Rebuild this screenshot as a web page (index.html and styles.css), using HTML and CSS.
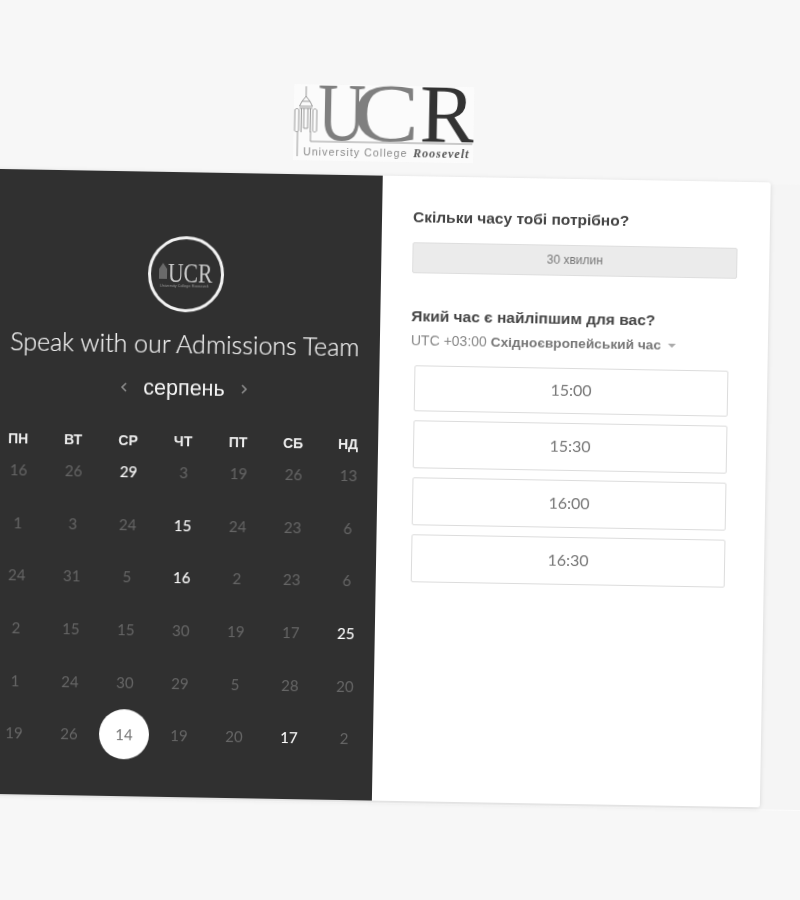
FILE: index.html
```html
<!DOCTYPE html>
<html lang="uk">
<head>
<meta charset="utf-8">
<title>Speak with our Admissions Team</title>
<link rel="stylesheet" href="styles.css">
</head>
<body>
<div class="stage">
  <header class="brand">
    <svg class="brand-logo" width="180" height="76" viewBox="0 0 180 76">
      <rect width="180" height="76" fill="#fbfbfb"/>
      <g fill="none" stroke="#999" stroke-width="1">
        <path d="M12 2V12M8 17L12 12L16 17M5.5 22L8 17H16L18.5 22Z"/>
        <path d="M5.5 24H18.5M7.5 24V48M10 24V44H14V24M16.5 24V48"/>
        <path d="M1 26C1 24 5 24 5 26V46C5 48 1 48 1 46ZM19 26C19 24 23 24 23 26V46C23 48 19 48 19 46Z"/>
        <path d="M4 47V72M17 47V57H179"/>
      </g>
      <g class="brand-letters">
        <text class="brand-gray" transform="translate(24 55) scale(.8 1)">U</text>
        <text class="brand-gray" transform="translate(59 55) scale(1.2 1)">C</text>
        <text class="brand-dark" transform="translate(126 55) scale(1 1)">R</text>
      </g>
      <text class="brand-tag" x="10" y="71">University College</text>
      <text class="brand-tag-name" x="120" y="71">Roosevelt</text>
    </svg>
  </header>
  <div class="band">
    <main class="card">
      <section class="panel-dark">
        <div class="avatar">
          <svg width="70" height="70" viewBox="0 0 70 70">
            <path d="M8 30V40H16V30L12 24Z" fill="#6a6a6a"/>
            <text class="avatar-letters" transform="translate(17 43) scale(.8 1)">UCR</text>
            <text class="avatar-tag" x="9" y="48">University College Roosevelt</text>
          </svg>
        </div>
        <h1 class="event-title">Speak with our Admissions Team</h1>
        <div class="month-nav">
          <svg width="8" height="12" viewBox="0 0 8 12"><path d="M6 2L2 6L6 10" fill="none" stroke="#8c8c8c" stroke-width="1.600"/></svg>
          <span class="month">серпень</span>
          <svg width="8" height="12" viewBox="0 0 8 12"><path d="M2 2L6 6L2 10" fill="none" stroke="#8c8c8c" stroke-width="1.600"/></svg>
        </div>
        <div class="weekdays">
          <span>ПН</span><span>ВТ</span><span>СР</span><span>ЧТ</span><span>ПТ</span><span>СБ</span><span>НД</span>
        </div>
        <div class="dates">
          <span>16</span><span>26</span><span class="on">29</span><span>3</span><span>19</span><span>26</span><span>13</span>
          <span>1</span><span>3</span><span>24</span><span class="on">15</span><span>24</span><span>23</span><span>6</span>
          <span>24</span><span>31</span><span>5</span><span class="on">16</span><span>2</span><span>23</span><span>6</span>
          <span>2</span><span>15</span><span>15</span><span>30</span><span>19</span><span>17</span><span class="on">25</span>
          <span>1</span><span>24</span><span>30</span><span>29</span><span>5</span><span>28</span><span>20</span>
          <span>19</span><span>26</span><span class="selected"><b>14</b></span><span>19</span><span>20</span><span class="on">17</span><span>2</span>
        </div>
      </section>
      <section class="panel-light">
        <h2 class="question">Скільки часу тобі потрібно?</h2>
        <div class="duration">30 хвилин</div>
        <h2 class="question question-time">Який час є найліпшим для вас?</h2>
        <div class="zone">UTC +03:00 <strong>Східноєвропейський час</strong><i class="caret"></i></div>
        <div class="slots">
          <button class="slot">15:00</button>
          <button class="slot">15:30</button>
          <button class="slot">16:00</button>
          <button class="slot">16:30</button>
        </div>
      </section>
    </main>
  </div>
</div>
</body>
</html>
```
FILE: styles.css
```css
html, body {
  margin: 0;
  height: 100%;
  overflow: hidden;
  background: #f7f7f7;
}

.stage {
  width: 800px;
  height: 900px;
  padding-top: 86px;
  box-sizing: border-box;
  transform: rotate(1deg);
  transform-origin: 400px 450px;
  filter: blur(0.35px);
  font-family: "Liberation Sans", Arial, sans-serif;
}

.brand {
  display: flex;
  justify-content: center;
  padding-right: 44px;
  height: 76px;
}

.brand-logo { display: block; }

.brand-letters text {
  font-family: "Liberation Serif", serif;
  font-size: 83px;
}
.brand-gray { fill: #7f7f7f; }
.brand-dark { fill: #333; }

.brand-tag {
  font-family: "Liberation Sans", sans-serif;
  font-size: 10.5px;
  letter-spacing: 1.1px;
  fill: #888;
}
.brand-tag-name {
  font-family: "Liberation Serif", serif;
  font-size: 12px;
  font-style: italic;
  font-weight: 700;
  letter-spacing: 1px;
  fill: #555;
}

.band {
  margin: 16px -100px 0;
  padding: 0 44px 2.4px 0;
  display: flex;
  justify-content: center;
  background: #f5f5f5;
  box-shadow: 0 1px 0 #fbfbfb;
}

.card {
  display: flex;
  width: 776px;
  height: 625px;
  flex: none;
  margin-top: -2px;
  border-radius: 3px;
  box-shadow: 0 1px 5px rgba(0, 0, 0, 0.13);
}

.panel-dark {
  width: 388px;
  box-sizing: border-box;
  padding: 64px 2px 0 0;
  background: #303030;
  color: #fff;
  display: flex;
  flex-direction: column;
  align-items: center;
}

.avatar {
  width: 70px;
  height: 70px;
  border: 3px solid #f2f2f2;
  border-radius: 50%;
}
.avatar svg { display: block; }
.avatar-letters {
  font-family: "Liberation Serif", serif;
  font-size: 27px;
  fill: #c8c8c8;
}
.avatar-tag {
  font-family: "Liberation Sans", sans-serif;
  font-size: 3.8px;
  fill: #999;
}

.event-title {
  margin: 15px 0 0;
  font-family: Lato, sans-serif;
  font-size: 25px;
  font-weight: 300;
  line-height: 32px;
  white-space: nowrap;
  color: #f5f5f5;
  -webkit-text-stroke: 0.15px #f5f5f5;
}

.month-nav {
  margin-top: 15px;
  height: 28px;
  display: flex;
  align-items: center;
  gap: 15px;
}
.month {
  font-size: 21.5px;
  line-height: 28px;
  color: #f5f5f5;
}

.weekdays, .dates {
  width: 385px;
  display: grid;
  grid-template-columns: repeat(7, 55px);
  text-align: center;
}

.weekdays {
  margin-top: 32px;
  font-size: 14px;
  font-weight: 700;
  line-height: 14px;
  color: #eee;
}

.dates {
  margin: 14px 0 0 2px;
  row-gap: 32.7px;
  font-family: Lato, sans-serif;
  font-size: 15px;
  line-height: 20px;
  color: #666;
}
.dates .on {
  color: #fff;
  -webkit-text-stroke: 0.1px #fff;
}
.selected {
  position: relative;
}
.selected::before {
  content: "";
  position: absolute;
  left: 50%;
  top: 50%;
  width: 50px;
  height: 50px;
  margin: -25px 0 0 -25px;
  border-radius: 50%;
  background: #fff;
}
.selected b {
  position: relative;
  font-weight: 400;
  color: #777;
}

.panel-light {
  width: 388px;
  box-sizing: border-box;
  padding: 31px 32px 0 31px;
  background: #fff;
  border-radius: 0 3px 3px 0;
}

.question {
  margin: 0;
  font-size: 15.5px;
  font-weight: 700;
  line-height: 20px;
  color: #444;
  white-space: nowrap;
}
.question-time { margin-top: 32.5px; }

.duration {
  margin-top: 15px;
  height: 29px;
  border: 1px solid #dedede;
  border-radius: 2px;
  background: #ebebeb;
  font-size: 12px;
  line-height: 29px;
  text-align: center;
  color: #777;
}

.zone {
  margin-top: 5px;
  font-size: 14px;
  line-height: 18px;
  color: #888;
  white-space: nowrap;
}
.zone strong {
  font-size: 13.7px;
  color: #777;
}
.caret {
  display: inline-block;
  margin-left: 7px;
  vertical-align: 2px;
  border: 4px solid transparent;
  border-top-color: #aaa;
  border-bottom-width: 0;
}

.slots {
  margin: 15px 0 0 4px;
  width: 314px;
  display: flex;
  flex-direction: column;
  gap: 9px;
}
.slot {
  height: 48px;
  padding: 0 0 2px;
  border: 1px solid #dcdcdc;
  border-radius: 2px;
  background: #fff;
  font-family: Lato, sans-serif;
  font-size: 16px;
  color: #777;
}
.slot:first-child { height: 46px; }
```
